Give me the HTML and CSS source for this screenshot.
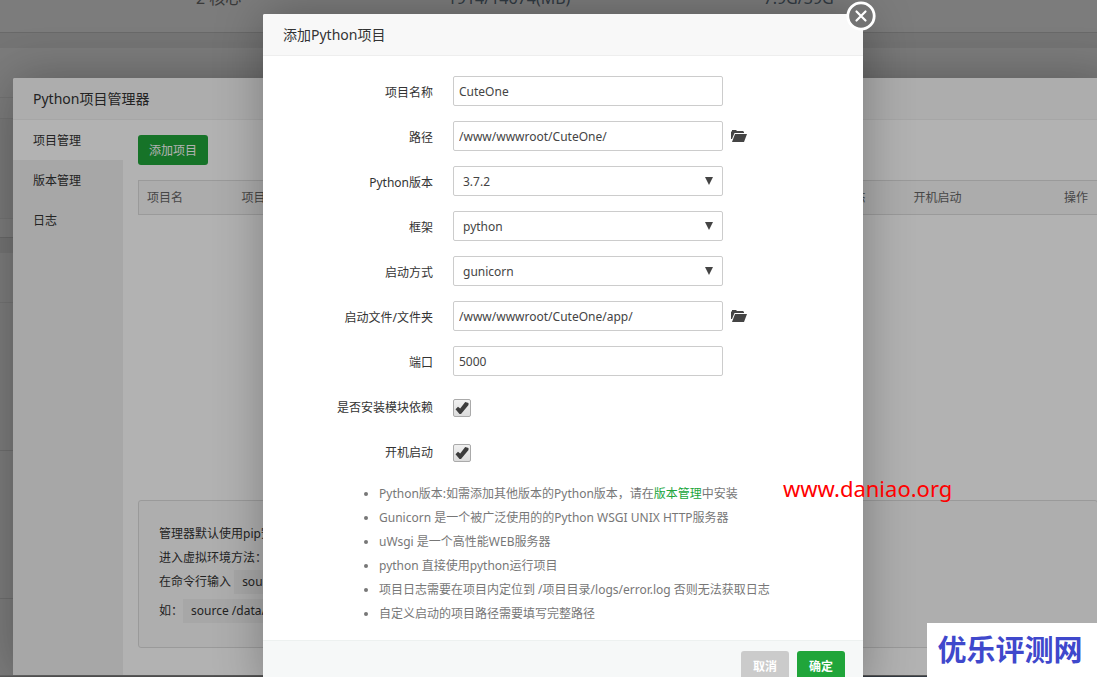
FILE: index.html
```html
<!DOCTYPE html>
<html lang="zh-CN">
<head>
<meta charset="utf-8">
<title>Python项目管理器</title>
<link rel="stylesheet" href="styles.css">
</head>
<body>
<div class="page">
  <section class="card stats">
    <span class="stat">2 核心</span>
    <span class="stat stat-blue">1914/14674(MB)</span>
    <span class="stat stat-blue">7.9G/39G</span>
  </section>
  <section class="card soft">
    <div class="card-head"></div>
    <div class="card-sub"></div>
    <div class="card-body"></div>
    <div class="card-foot"></div>
  </section>
  <section class="card fill">
    <div class="card-head"></div>
    <div class="panel-row"></div>
    <div class="panel-row"></div>
    <div class="panel-end"></div>
  </section>
  <div class="page-end"><span></span></div>
</div>
<div class="shade"></div>

<section class="window manager">
  <h2 class="window-title">Python项目管理器</h2>
  <div class="manager-body">
    <nav class="side">
      <a class="side-link active" href="#projects">项目管理</a>
      <a class="side-link" href="#versions">版本管理</a>
      <a class="side-link" href="#logs">日志</a>
    </nav>
    <div class="manager-main">
      <button class="btn btn-add" type="button">添加项目</button>
      <table class="projects">
        <thead>
          <tr><th class="col-name">项目名</th><th class="col-path">项目路径</th><th class="col-state">状态</th><th class="col-boot">开机启动</th><th class="col-action">操作</th></tr>
        </thead>
      </table>
      <div class="help">
        <p>管理器默认使用pip安装</p>
        <p>进入虚拟环境方法：</p>
        <p>在命令行输入 <code>source</code></p>
        <p class="help-example">如：<code>source /data/python</code></p>
      </div>
    </div>
  </div>
</section>
<div class="shade"></div>

<section class="window dialog" role="dialog" aria-labelledby="dialog-title">
  <h2 class="window-title" id="dialog-title">添加Python项目</h2>
  <button class="close" type="button" aria-label="关闭">
    <svg viewBox="0 0 30 30" width="30" height="30"><circle cx="15" cy="15" r="13.2" fill="#737373" stroke="#fff" stroke-width="2.8"/><path d="M10.5 10.5l9 9M19.500 10.500l-9 9" stroke="#fff" stroke-width="2.2" stroke-linecap="round"/></svg>
  </button>
  <form class="form">
    <div class="row"><label for="name">项目名称</label><input class="field" id="name" type="text" value="CuteOne"></div>
    <div class="row"><label for="path">路径</label><input class="field" id="path" type="text" value="/www/wwwroot/CuteOne/">
      <button class="folder" type="button" aria-label="选择路径"><svg viewBox="0 0 16 12" width="16" height="12"><path d="M0 9V2l1-1V0h4l1 1h6l1 1v1H3.500L1 9zM4 4h12l-3 8H1z" fill="#444"/></svg></button></div>
    <div class="row"><label for="version">Python版本</label><div class="select"><select class="field" id="version"><option>3.7.2</option></select><svg class="arrow" viewBox="0 0 8 8" width="8" height="8"><path d="M0 0h8L4 8z" fill="#444"/></svg></div></div>
    <div class="row"><label for="framework">框架</label><div class="select"><select class="field" id="framework"><option>python</option></select><svg class="arrow" viewBox="0 0 8 8" width="8" height="8"><path d="M0 0h8L4 8z" fill="#444"/></svg></div></div>
    <div class="row"><label for="mode">启动方式</label><div class="select"><select class="field" id="mode"><option>gunicorn</option></select><svg class="arrow" viewBox="0 0 8 8" width="8" height="8"><path d="M0 0h8L4 8z" fill="#444"/></svg></div></div>
    <div class="row"><label for="entry">启动文件/文件夹</label><input class="field" id="entry" type="text" value="/www/wwwroot/CuteOne/app/">
      <button class="folder" type="button" aria-label="选择启动文件"><svg viewBox="0 0 16 12" width="16" height="12"><path d="M0 9V2l1-1V0h4l1 1h6l1 1v1H3.500L1 9zM4 4h12l-3 8H1z" fill="#444"/></svg></button></div>
    <div class="row"><label for="port">端口</label><input class="field" id="port" type="text" value="5000"></div>
    <div class="row"><label for="deps">是否安装模块依赖</label><div class="check"><input id="deps" type="checkbox" checked><svg class="tick" viewBox="0 0 18 18" width="18" height="18"><path d="M2.500 10.200l2.500-2.400 2.200 1.700 5-6.500L15.500 4v2L8 15H6.500z" fill="#3c3c3c"/></svg></div></div>
    <div class="row"><label for="boot">开机启动</label><div class="check"><input id="boot" type="checkbox" checked><svg class="tick" viewBox="0 0 18 18" width="18" height="18"><path d="M2.500 10.200l2.500-2.400 2.200 1.700 5-6.500L15.500 4v2L8 15H6.500z" fill="#3c3c3c"/></svg></div></div>
    <ul class="notes">
      <li>Python版本:如需添加其他版本的Python版本，请在<a href="#versions">版本管理</a>中安装</li>
      <li>Gunicorn 是一个被广泛使用的的Python WSGI UNIX HTTP服务器</li>
      <li>uWsgi 是一个高性能WEB服务器</li>
      <li>python 直接使用python运行项目</li>
      <li>项目日志需要在项目内定位到 /项目目录/logs/error.log 否则无法获取日志</li>
      <li>自定义启动的项目路径需要填写完整路径</li>
    </ul>
    <div class="actions">
      <button class="btn btn-cancel" type="button">取消</button>
      <button class="btn btn-ok" type="button">确定</button>
    </div>
  </form>
</section>

<div class="site-mark">www.daniao.org</div>
<div class="brand-mark">优乐评测网</div>
</body>
</html>
```
FILE: styles.css
```css
* { box-sizing: border-box; }

body {
  margin: 0;
  height: 100vh;
  overflow: hidden;
  position: relative;
  background: #f0f0f0;
  color: #333;
  font: 12px/24px "Noto Sans", "Noto Sans CJK SC", sans-serif;
}

h2, p, ul { margin: 0; }
button, input, select { font: inherit; color: inherit; }
button { border: 0; padding: 0; cursor: pointer; }

/* dashboard behind the windows */
.page { height: 100%; display: flex; flex-direction: column; gap: 15px; }
.card { background: #fff; border-bottom: 1px solid #d8d8d8; }
.stats {
  display: grid;
  grid-template-columns: 22% 30% 24% 24%;
  height: 73px;
  margin-top: -40px;
  padding-top: 26px;
  flex: none;
}
.stat { font-size: 16px; color: #777; white-space: nowrap; justify-self: end; }
.stat-blue { color: #678; }
.card-head { height: 50px; border-bottom: 1px solid #eee; }
.card-sub { height: 21px; border-bottom: 1px solid #eee; }
.card-body { height: 100px; background: #fafafa; border-bottom: 1px solid #eee; }
.card-foot { height: 18px; }
.fill { flex: 1; margin-bottom: -15px; }
.panel-row { height: 148px; border-bottom: 1px solid #e4e4e4; }
.panel-end { height: 76px; }
.page-end { flex: none; height: 2px; display: flex; justify-content: flex-end; background: #bbb; }
.page-end span { width: 240px; background: #7c8ea0; }

.shade { position: absolute; inset: 0; background: rgba(0, 0, 0, .3); }

/* windows */
.window {
  position: absolute;
  background: #fff;
  border-radius: 2px;
  box-shadow: 1px 1px 50px rgba(0, 0, 0, .3);
}
.window-title {
  height: 42px;
  padding: 0 20px;
  border-bottom: 1px solid #eee;
  border-radius: 2px 2px 0 0;
  background: #f8f8f8;
  font-size: 14px;
  font-weight: 400;
  line-height: 41px;
}

.btn { height: 30px; border-radius: 3px; background: #20a53a; color: #fff; font-size: 12px; line-height: 32px; }

.manager { top: 78px; bottom: 2px; left: 13px; right: -16px; display: flex; flex-direction: column; }
.manager-body { flex: 1; display: flex; }
.side { width: 110px; background: #f0f0f0; }
.side-link { display: block; height: 40px; padding-left: 20px; line-height: 42px; color: #333; text-decoration: none; }
.side-link.active { background: #fff; }
.manager-main { flex: 1; min-width: 0; padding: 15px; display: flex; flex-direction: column; align-items: flex-start; }
.btn-add { width: 70px; }
.projects {
  width: 100%;
  margin-top: 15px;
  table-layout: fixed;
  border-collapse: collapse;
  border: 1px solid #ddd;
  background: #f6f6f6;
  color: #666;
}
.projects th { height: 34px; padding: 0 8px; font-weight: 400; text-align: left; }
.projects .col-name { width: 95px; }
.projects .col-state { width: 72px; }
.projects .col-boot { width: 142px; }
.projects .col-action { width: 50px; padding-right: 9px; text-align: right; }
.help {
  width: 100%;
  height: 148px;
  margin-top: auto;
  margin-bottom: 12px;
  padding: 21px 20px;
  border: 1px solid #ddd;
  border-radius: 3px;
  background: #fafafa;
  white-space: nowrap;
  overflow: hidden;
}
.help code { display: inline-block; padding: 0 8px; background: #f0f0f0; font-family: inherit; }
.help-example { margin-top: 5px; }

.dialog { top: 14px; left: 263px; width: 600px; }
.close { position: absolute; top: -13px; right: -13px; width: 30px; height: 30px; background: none; }
.close svg, .folder svg, .arrow, .tick { display: block; }

.form { padding-top: 20px; }
.row { display: flex; align-items: center; height: 30px; margin-bottom: 15px; }
.row label { width: 170px; margin-right: 20px; padding-top: 4px; text-align: right; }
.field {
  width: 270px;
  height: 30px;
  padding: 0 5px;
  border: 1px solid #ccc;
  border-radius: 2px;
  background: #fff;
  color: #444;
  outline: 0;
}
.select, .check { position: relative; }
.select .field { display: block; appearance: none; padding: 1px 9px 0; }
.arrow { position: absolute; top: 11px; right: 10px; pointer-events: none; }
.folder { margin-left: 8px; background: none; }
.check { margin-top: 4px; }
.check input {
  display: block;
  appearance: none;
  width: 18px;
  height: 18px;
  margin: 0;
  border: 1px solid #aaa;
  border-radius: 2px;
  background: linear-gradient(#f0f0f0, #dcdcdc);
}
.tick { position: absolute; top: 0; left: 0; pointer-events: none; }

.notes { padding: 1px 20px 14px 116px; color: #777; }
.notes a { color: #20a53a; text-decoration: none; }
.actions {
  display: flex;
  justify-content: flex-end;
  gap: 8px;
  padding: 10px 18px;
  border-top: 1px solid #edf1f0;
  background: #f6f8f8;
}
.actions .btn { width: 48px; font-weight: 700; }
.actions .btn-cancel { background: #cbcbcb; }

/* marks laid over the page */
.site-mark { position: absolute; left: 783px; top: 473px; color: #f00; font-size: 22px; line-height: 30px; }
.brand-mark {
  position: absolute;
  right: 0;
  bottom: 0;
  width: 170px;
  height: 54px;
  padding-right: 4px;
  background: #fff;
  color: #3f48cc;
  font-size: 29px;
  font-weight: 700;
  line-height: 54px;
  text-align: center;
}
```
